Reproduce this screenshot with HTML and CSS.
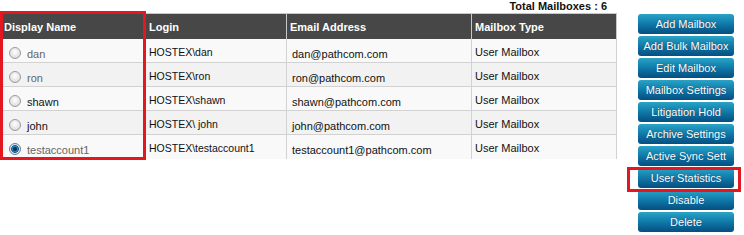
FILE: index.html
```html
<!DOCTYPE html>
<html lang="en">
<head>
    <meta charset="UTF-8">
    <title>Mailboxes</title>
    <link rel="stylesheet" href="styles.css">
</head>
<body>
    <div class="page">
        <div class="main">
            <div class="total">Total Mailboxes : 6</div>
            <div class="grid-wrap">
                <table class="grid">
                    <colgroup>
                        <col class="c-name">
                        <col class="c-login">
                        <col class="c-mail">
                        <col class="c-type">
                    </colgroup>
                    <thead>
                        <tr>
                            <th>Display Name</th>
                            <th>Login</th>
                            <th>Email Address</th>
                            <th>Mailbox Type</th>
                        </tr>
                    </thead>
                    <tbody>
                        <tr>
                            <td><label class="pick"><input type="radio" name="mb"><span class="dim">dan</span></label></td>
                            <td class="login">HOSTEX\dan</td>
                            <td class="mail">dan@pathcom.com</td>
                            <td class="type">User Mailbox</td>
                        </tr>
                        <tr>
                            <td><label class="pick"><input type="radio" name="mb"><span class="dim">ron</span></label></td>
                            <td class="login">HOSTEX\ron</td>
                            <td class="mail">ron@pathcom.com</td>
                            <td class="type">User Mailbox</td>
                        </tr>
                        <tr>
                            <td><label class="pick"><input type="radio" name="mb"><span>shawn</span></label></td>
                            <td class="login">HOSTEX\shawn</td>
                            <td class="mail">shawn@pathcom.com</td>
                            <td class="type">User Mailbox</td>
                        </tr>
                        <tr>
                            <td><label class="pick"><input type="radio" name="mb"><span>john</span></label></td>
                            <td class="login">HOSTEX\ john</td>
                            <td class="mail">john@pathcom.com</td>
                            <td class="type">User Mailbox</td>
                        </tr>
                        <tr>
                            <td><label class="pick"><input type="radio" name="mb" checked><span class="dim">testaccount1</span></label></td>
                            <td class="login">HOSTEX\testaccount1</td>
                            <td class="mail">testaccount1@pathcom.com</td>
                            <td class="type">User Mailbox</td>
                        </tr>
                    </tbody>
                </table>
                <span class="mark mark-names"></span>
            </div>
        </div>

        <div class="actions">
            <button class="act">Add Mailbox</button>
            <button class="act">Add Bulk Mailbox</button>
            <button class="act">Edit Mailbox</button>
            <button class="act">Mailbox Settings</button>
            <button class="act">Litigation Hold</button>
            <button class="act">Archive Settings</button>
            <button class="act">Active Sync Sett</button>
            <div class="act-hl">
                <button class="act">User Statistics</button>
                <span class="mark mark-btn"></span>
            </div>
            <button class="act">Disable</button>
            <button class="act">Delete</button>
        </div>
    </div>
</body>
</html>
```

FILE: styles.css
```css
body {
    font-family: 'Liberation Sans', Arial, sans-serif;
    background-color: #fff;
    color: #111;
    margin: 0;
    padding: 0;
}
.page {
    display: flex;
    align-items: flex-start;
}
.main {
    width: 616px;
}
.total {
    height: 13px;
    line-height: 12px;
    font-size: 11px;
    font-weight: bold;
    text-align: right;
    padding-right: 9px;
    box-sizing: border-box;
}
.grid-wrap {
    position: relative;
    padding-left: 1px;
}
.grid {
    border-collapse: collapse;
    table-layout: fixed;
    width: 615px;
    font-size: 11px;
}
.c-name { width: 144px; }
.c-login { width: 141px; }
.c-mail { width: 185px; }
.c-type { width: 145px; }
.grid th {
    background-color: #474747;
    color: white;
    font-weight: bold;
    text-align: left;
    height: 25px;
    padding: 2px 3px 0;
    border: 1px solid #c8c8c8;
    border-bottom: none;
    box-sizing: border-box;
}
.grid th:first-child {
    padding-left: 2px;
}
.grid td {
    height: 24px;
    padding: 3px 3px 0;
    border: 1px solid #d2d2d2;
    box-sizing: border-box;
    white-space: nowrap;
}
.grid tbody tr:first-child td {
    border-top: none;
}
.grid tbody tr:nth-child(odd) td {
    background-color: #f9f9f9;
}
.grid tbody tr:nth-child(even) td {
    background-color: #f2f2f2;
}
.grid tbody tr:last-child td {
    border-bottom: none;
}
.grid td.login {
    font-size: 10.5px;
}
.grid td.mail {
    padding-left: 5px;
    padding-top: 7px;
}
.pick {
    display: flex;
    align-items: center;
    padding-left: 4px;
    padding-top: 2px;
}
.pick input {
    appearance: none;
    -webkit-appearance: none;
    width: 12px;
    height: 12px;
    margin: 0 6px 0 0;
    border: 1px solid #9c9c9c;
    border-radius: 50%;
    background: radial-gradient(circle at 50% 40%, #ffffff 0, #e6e6e6 55%, #cfcfcf 100%);
}
.pick input:checked {
    border-color: #6f7f8c;
    background: radial-gradient(circle at 50% 50%, #0c3354 0, #0c3354 1.5px, #1f86c6 2.5px, #1466a0 3.6px, #e8e8e8 4.2px, #cfcfcf 100%);
}
.pick span {
    padding-top: 2px;
}
.dim {
    color: #666;
}
.mark {
    position: absolute;
    border: 3px solid #e4161f;
    box-sizing: border-box;
    pointer-events: none;
}
.mark-names {
    left: 0;
    top: -2px;
    width: 146px;
    height: 149px;
}
.actions {
    margin-left: 22px;
    padding-top: 14px;
    display: flex;
    flex-direction: column;
    gap: 2px;
}
.act {
    display: block;
    width: 96px;
    height: 20px;
    padding: 0 4px;
    border: none;
    border-radius: 3px;
    background: linear-gradient(#2aa3c6 0, #1586b2 35%, #0b6798 70%, #064f80 100%);
    color: white;
    font-family: 'Liberation Sans', Arial, sans-serif;
    font-size: 11px;
    text-shadow: 0 0 1px rgba(0,30,60,0.6);
    white-space: nowrap;
    overflow: hidden;
    cursor: pointer;
}
.act-hl {
    position: relative;
}
.mark-btn {
    left: -11px;
    top: -1px;
    width: 114px;
    height: 25px;
}
```
